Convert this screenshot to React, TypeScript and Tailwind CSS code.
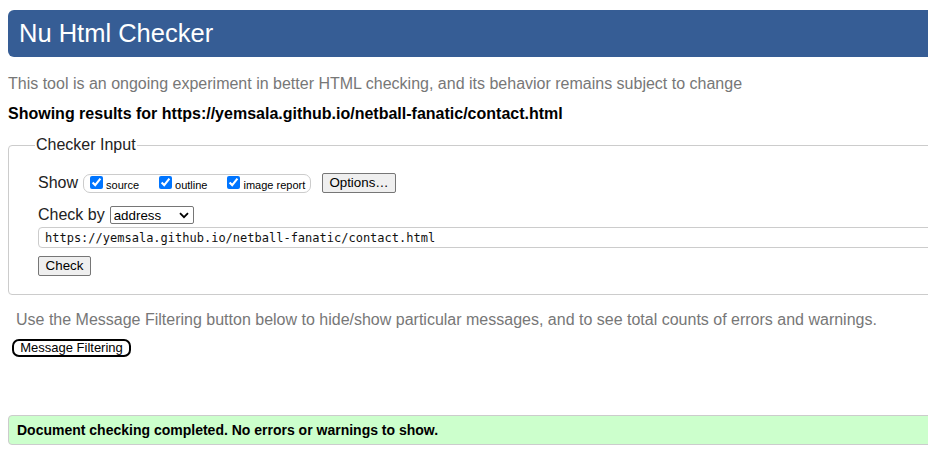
import React from 'react';

const sans = "font-['Liberation_Sans',Arial,sans-serif]";

const ShowOption: React.FC<{ label: string; className?: string }> = ({ label, className }) => (
  <label className={`flex items-center ${className ?? ''}`}>
    <input type="checkbox" defaultChecked className="m-0 h-[13px] w-[13px] -translate-y-[1px] accent-[#0075ff]" />
    <span className="ml-[3px] text-[11px] leading-[13px] translate-y-[2px]">{label}</span>
  </label>
);

export default function App() {
  return (
    <div className={`h-[456px] w-[928px] overflow-hidden bg-white text-black ${sans}`}>
      <div className="w-[1010px] pl-2 pt-[10px]">
        <header className="flex h-[47px] items-center rounded-[6px] bg-[#365d95] pl-[11px] text-[25.5px] text-white">
          Nu Html Checker
        </header>

        <p className="mt-[18px] text-[16px] leading-[18px] text-[#777]">
          This tool is an ongoing experiment in better HTML checking, and its behavior remains subject to change
        </p>
        <p className="mt-[12px] text-[16px] font-bold leading-[18px]">
          Showing results for https://yemsala.github.io/netball-fanatic/contact.html
        </p>

        <fieldset className="mt-[13px] rounded-[4px] border border-[#ccc] pb-[17px] pl-[29px]">
          <legend className="-ml-[3px] px-[1px] text-[16px] leading-[18px] text-[#222]">Checker Input</legend>

          <div className="mt-[19px] flex h-[20px] items-center">
            <span className="text-[16px] leading-[18px] text-[#222]">Show</span>
            <div className="ml-[5px] flex h-[19px] w-[228px] items-center rounded-[7px] border border-[#ccc] pl-[6px]">
              <ShowOption label="source" />
              <ShowOption label="outline" className="ml-[20px]" />
              <ShowOption label="image report" className="ml-[20px]" />
            </div>
            <button className="ml-[11px] h-[20px] w-[74px] rounded-[2px] border border-[#767676] bg-[#efefef] text-[13.33px] leading-[16px]">
              Options…
            </button>
          </div>

          <div className="mt-[13px] flex h-[18px] items-center">
            <span className="text-[16px] leading-[18px] text-[#222]">Check by</span>
            <div className="relative ml-[5px] h-[18px] w-[84px] rounded-[2px] border border-[#767676] bg-white">
              <span className="absolute left-[3px] top-[1px] text-[13.33px] leading-[15px]">address</span>
              <svg className="absolute right-[4px] top-[5px]" width="10" height="7" viewBox="0 0 10 7">
                <path d="M1 1.2 L5 5.2 L9 1.2" fill="none" stroke="#000" strokeWidth="1.8" />
              </svg>
            </div>
          </div>

          <div className="mt-[3px] flex h-[21px] items-center rounded-[4px] border border-[#ccc] pl-[6px] font-['DejaVu_Sans_Mono',monospace] text-[12px] text-[#111]">
            https://yemsala.github.io/netball-fanatic/contact.html
          </div>

          <button className="mt-[8px] h-[20px] w-[53px] rounded-[2px] border border-[#767676] bg-[#efefef] text-[13.33px] leading-[16px]">
            Check
          </button>
        </fieldset>

        <p className="ml-2 mt-[16px] text-[16px] leading-[18px] text-[#777]">
          Use the Message Filtering button below to hide/show particular messages, and to see total counts of errors and warnings.
        </p>
        <button className="ml-[4px] mt-[10px] flex h-[18px] w-[119px] items-center justify-center rounded-[7px] border-2 border-black text-[13px] leading-[14px]">
          Message Filtering
        </button>

        <div className="mt-[58px] flex h-[30px] items-center rounded-l-[4px] border border-[#ccc] bg-[#ccffcc] pl-2 text-[14px] font-bold">
          Document checking completed. No errors or warnings to show.
        </div>
      </div>
    </div>
  );
}
